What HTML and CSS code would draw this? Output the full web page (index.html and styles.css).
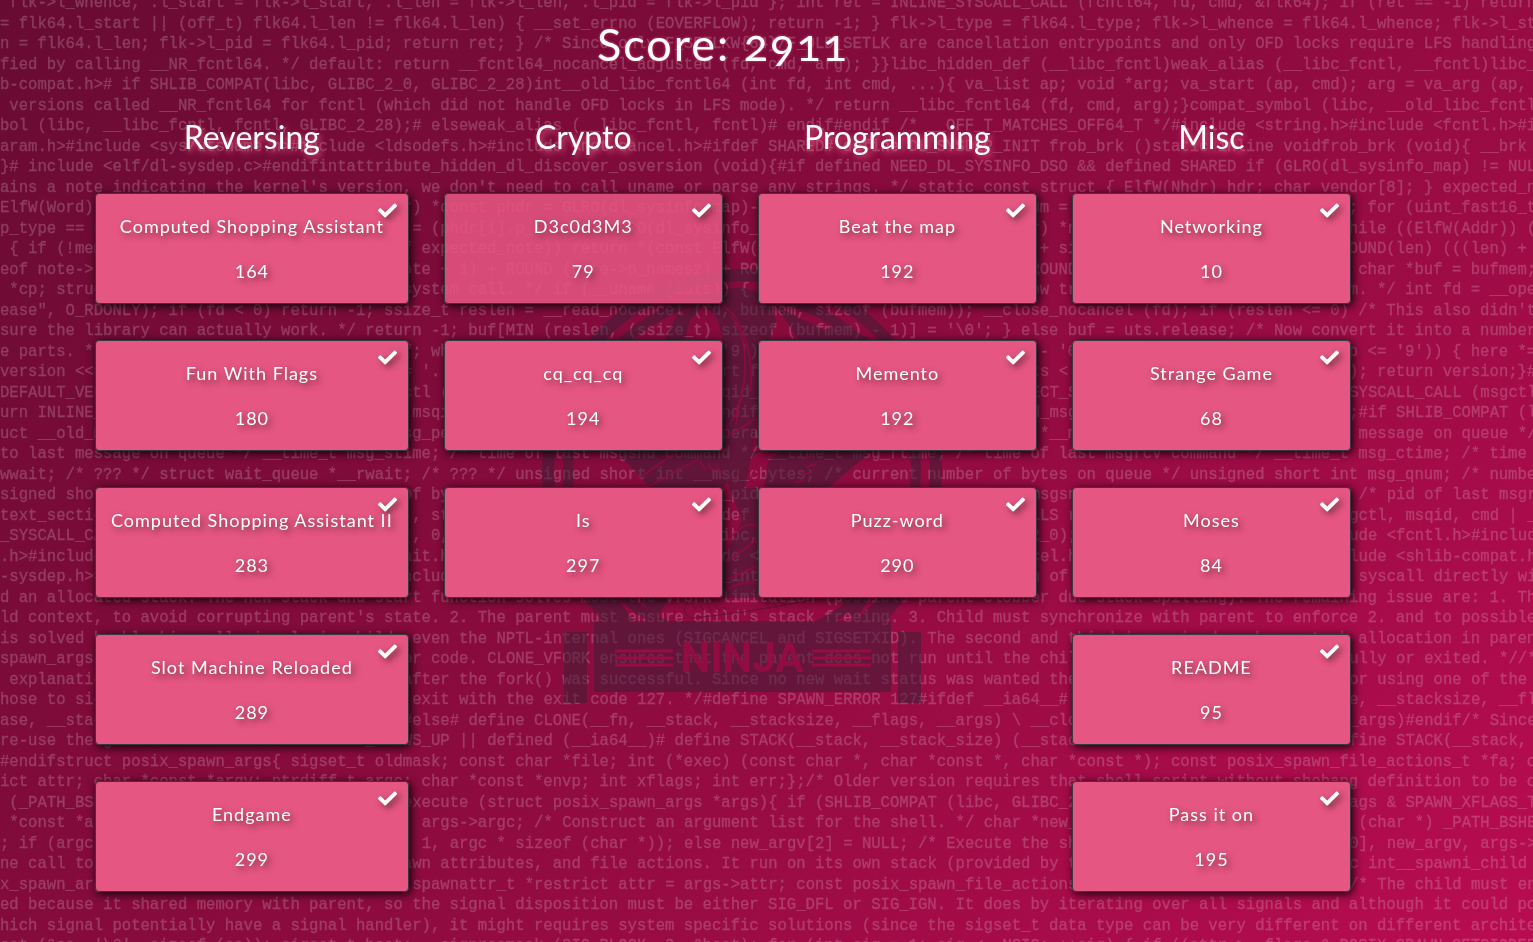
FILE: index.html
```html
<!DOCTYPE html>
<html lang="en">
<head>
<meta charset="utf-8">
<meta name="viewport" content="width=device-width, initial-scale=1">
<title>Challenges</title>
<link rel="stylesheet" href="styles.css">
</head>
<body>
<svg class="backdrop" viewBox="0 0 1533 942" preserveAspectRatio="xMinYMin slice" aria-hidden="true">
  <g transform="scale(.0976)">
    <text class="code" x="0" y="-135">
      <tspan x="0" dy="210"> flk-&gt;l_whence, .l_start = flk-&gt;l_start, .l_len = flk-&gt;l_len, .l_pid = flk-&gt;l_pid }; int ret = INLINE_SYSCALL_CALL (fcntl64, fd, cmd, &amp;flk64); if (ret == -1) return</tspan>
      <tspan x="0" dy="210">= flk64.l_start || (off_t) flk64.l_len != flk64.l_len) { __set_errno (EOVERFLOW); return -1; } flk-&gt;l_type = flk64.l_type; flk-&gt;l_whence = flk64.l_whence; flk-&gt;l_st</tspan>
      <tspan x="0" dy="210">n = flk64.l_len; flk-&gt;l_pid = flk64.l_pid; return ret; } /* Since only F_SETLKW{64}/F_OLD_SETLK are cancellation entrypoints and only OFD locks require LFS handling</tspan>
      <tspan x="0" dy="210">fied by calling __NR_fcntl64. */ default: return __fcntl64_nocancel_adjusted (fd, cmd, arg); }}libc_hidden_def (__libc_fcntl)weak_alias (__libc_fcntl, __fcntl)libc_</tspan>
      <tspan x="0" dy="210">b-compat.h&gt;# if SHLIB_COMPAT(libc, GLIBC_2_0, GLIBC_2_28)int__old_libc_fcntl64 (int fd, int cmd, ...){ va_list ap; void *arg; va_start (ap, cmd); arg = va_arg (ap, </tspan>
      <tspan x="0" dy="210"> versions called __NR_fcntl64 for fcntl (which did not handle OFD locks in LFS mode). */ return __libc_fcntl64 (fd, cmd, arg);}compat_symbol (libc, __old_libc_fcntl</tspan>
      <tspan x="0" dy="210">bol (libc, __libc_fcntl, fcntl, GLIBC_2_28);# elseweak_alias (__libc_fcntl, fcntl)# endif#endif /* __OFF_T_MATCHES_OFF64_T */#include &lt;string.h&gt;#include &lt;fcntl.h&gt;#i</tspan>
      <tspan x="0" dy="210">aram.h&gt;#include &lt;sys/utsname.h&gt;#include &lt;ldsodefs.h&gt;#include &lt;not-cancel.h&gt;#ifdef SHARED# define DL_SYSDEP_INIT frob_brk ()static inline voidfrob_brk (void){ __brk (0</tspan>
      <tspan x="0" dy="210">}# include &lt;elf/dl-sysdep.c&gt;#endifintattribute_hidden_dl_discover_osversion (void){#if defined NEED_DL_SYSINFO_DSO &amp;&amp; defined SHARED if (GLRO(dl_sysinfo_map) != NUL</tspan>
      <tspan x="0" dy="210">ains a note indicating the kernel's version, we don't need to call uname or parse any strings. */ static const struct { ElfW(Nhdr) hdr; char vendor[8]; } expected_n</tspan>
      <tspan x="0" dy="210">ElfW(Word)), 0 }, "Linux" }; const ElfW(Phdr) *const phdr = GLRO(dl_sysinfo_map)-&gt;l_phdr; const ElfW(Word) phnum = GLRO(dl_sysinfo_map)-&gt;l_phnum; for (uint_fast16_t</tspan>
      <tspan x="0" dy="210">p_type == PT_NOTE) { const ElfW(Addr) start = (phdr[i].p_vaddr + GLRO(dl_sysinfo_map)-&gt;l_addr); const ElfW(Nhdr) *note = (const void *) start; while ((ElfW(Addr)) (</tspan>
      <tspan x="0" dy="210"> { if (!memcmp (note, &amp;expected_note, sizeof expected_note)) return *(const ElfW(Word) *) ((const void *) note + sizeof expected_note);#define ROUND(len) (((len) + </tspan>
      <tspan x="0" dy="210">eof note-&gt;n_type) note = ((const void *) (note + 1) + ROUND (note-&gt;n_namesz) + ROUND (note-&gt;n_descsz));#undef ROUND } } }#endif char bufmem[64]; char *buf = bufmem;</tspan>
      <tspan x="0" dy="210"> *cp; struct utsname uts; /* Try the uname system call. */ if (__uname (&amp;uts)) { /* This was not successful. Now try reading the /proc filesystem. */ int fd = __ope</tspan>
      <tspan x="0" dy="210">ease", O_RDONLY); if (fd &lt; 0) return -1; ssize_t reslen = __read_nocancel (fd, bufmem, sizeof (bufmem)); __close_nocancel (fd); if (reslen &lt;= 0) /* This also didn't</tspan>
      <tspan x="0" dy="210">sure the library can actually work. */ return -1; buf[MIN (reslen, (ssize_t) sizeof (bufmem) - 1)] = '\0'; } else buf = uts.release; /* Now convert it into a number</tspan>
      <tspan x="0" dy="210">e parts. */ unsigned int parts = 0; cp = buf; while ((*cp &gt;= '0') &amp;&amp; (*cp &lt;= '9')) { unsigned int here = *cp++ - '0'; while ((*cp &gt;= '0') &amp;&amp; (*cp &lt;= '9')) { here *=</tspan>
      <tspan x="0" dy="210">version &lt;&lt;= 8; version |= here; if (*cp++ != '.'</tspan><tspan x="6144">/* Another part following? */ break; } if (parts &lt; 3) version &lt;&lt;= 8 * (3 - parts); return version;}#</tspan>
      <tspan x="0" dy="210">DEFAULT_VERSION</tspan><tspan x="3840">msgctl (int</tspan><tspan x="7200">msqid_ds</tspan><tspan x="10272">DIRECT_SYSV</tspan><tspan x="13152">INLINE_SYSCALL_CALL (msgctl</tspan>
      <tspan x="0" dy="210">urn INLINE_SYSCALL</tspan><tspan x="4224">msqid</tspan><tspan x="7296">endif</tspan><tspan x="10464">ld_msgctl</tspan><tspan x="13824">;#if SHLIB_COMPAT (l</tspan>
      <tspan x="0" dy="210">uct __old_msqid_ds</tspan><tspan x="4032">msg_perm</tspan><tspan x="7296">operation</tspan><tspan x="10656">*__msg_first</tspan><tspan x="13920">message on queue */</tspan>
      <tspan x="0" dy="210">to last message on queue */ __time_t msg_stime; /* time of last msgsnd command */ __time_t msg_rtime; /* time of last msgrcv command */ __time_t msg_ctime; /* time </tspan>
      <tspan x="0" dy="210">wwait; /* ??? */ struct wait_queue *__rwait; /* ??? */ unsigned short int __msg_cbytes; /* current number of bytes on queue */ unsigned short int msg_qnum; /* numbe</tspan>
      <tspan x="0" dy="210">signed short int</tspan><tspan x="4128">of bytes</tspan><tspan x="7296">__pid_t</tspan><tspan x="10560">msgsnd */</tspan><tspan x="13920">/* pid of last msgr</tspan>
      <tspan x="0" dy="210">text_section</tspan><tspan x="4224">, struct</tspan><tspan x="7200">ifdef </tspan><tspan x="10368">CALLS return</tspan><tspan x="13632">msgctl, msqid, cmd | _</tspan>
      <tspan x="0" dy="210">_SYSCALL_CALL</tspan><tspan x="4224">, 0, </tspan><tspan x="7296">libc, </tspan><tspan x="9984">GLIBC_2_0);</tspan><tspan x="13344">#include &lt;fcntl.h&gt;#includ</tspan>
      <tspan x="0" dy="210">.h&gt;#include</tspan><tspan x="4032">wait.h&gt;</tspan><tspan x="6816">#include &lt;</tspan><tspan x="10272">cancel.h&gt;</tspan><tspan x="13440">#include &lt;shlib-compat.h</tspan>
      <tspan x="0" dy="210">-sysdep.h&gt;#include</tspan><tspan x="3936">#include</tspan><tspan x="7392">_internal</tspan><tspan x="10464">on of</tspan><tspan x="13920">syscall directly wi</tspan>
      <tspan x="0" dy="210">d an allocated stack. The new stack and start function solves most the vfork limitation (possible parent clobber due stack spilling). The remaining issue are: 1. Th</tspan>
      <tspan x="0" dy="210">ld context, to avoid corrupting parent's state. 2. The parent must ensure child's stack freeing. 3. Child must synchronize with parent to enforce 2. and to possible</tspan>
      <tspan x="0" dy="210">is solved by blocking all signals in child, even the NPTL-internal ones (SIGCANCEL and SIGSETXID). The second and third issue is done by a stack allocation in paren</tspan>
      <tspan x="0" dy="210">spawn_args</tspan><tspan x="4128">or code. CLONE_VFORK ensures that the parent does not run until the child</tspan><tspan x="13056">successfully or exited. *//*</tspan>
      <tspan x="0" dy="210"> explanation</tspan><tspan x="4128">after the fork() was successful. Since no new wait status was wanted the</tspan><tspan x="13824">or using one of the </tspan>
      <tspan x="0" dy="210">hose to signal</tspan><tspan x="4224">exit with the exit code 127. */#define SPAWN_ERROR 127#ifdef __ia64__# </tspan><tspan x="13824">e, __stacksize, __fl</tspan>
      <tspan x="0" dy="210">ase, __stack</tspan><tspan x="4128">#else# define CLONE(__fn, __stack, __stacksize, __flags, __args) \ __clone</tspan><tspan x="13824">_args)#endif/* Since</tspan>
      <tspan x="0" dy="210">re-use the generic</tspan><tspan x="3744">_GROWS_UP || defined (__ia64__)# define STACK(__stack, __stack_size) (__stack</tspan><tspan x="13632">define STACK(__stack, </tspan>
      <tspan x="0" dy="210">#endifstruct posix_spawn_args{ sigset_t oldmask; const char *file; int (*exec) (const char *, char *const *, char *const *); const posix_spawn_file_actions_t *fa; c</tspan>
      <tspan x="0" dy="210">ict attr; char *const *argv; ptrdiff_t argc; char *const *envp; int xflags; int err;};/* Older version requires that shell script without shebang definition to be c</tspan>
      <tspan x="0" dy="210"> (_PATH_BSHELL</tspan><tspan x="4128">execute (struct posix_spawn_args *args){ if (SHLIB_COMPAT (libc, GLIBC_2_15)</tspan><tspan x="13536">xflags &amp; SPAWN_XFLAGS_T</tspan>
      <tspan x="0" dy="210"> *const *argv</tspan><tspan x="4320">args-&gt;argc; /* Construct an argument list for the shell. */ char *new_argv</tspan><tspan x="13920">(char *) _PATH_BSHE</tspan>
      <tspan x="0" dy="210">; if (argc</tspan><tspan x="4320">1, argc * sizeof (char *)); else new_argv[2] = NULL; /* Execute the shell</tspan><tspan x="13824">0], new_argv, args-&gt;</tspan>
      <tspan x="0" dy="210">ne call to</tspan><tspan x="3936">spawn attributes, and file actions. It run on its own stack (provided by the</tspan><tspan x="13344">static int__spawni_child </tspan>
      <tspan x="0" dy="210">x_spawn_args</tspan><tspan x="4224">spawnattr_t *restrict attr = args-&gt;attr; const posix_spawn_file_actions</tspan><tspan x="13824">/* The child must en</tspan>
      <tspan x="0" dy="210">ed because it shared memory with parent, so the signal disposition must be either SIG_DFL or SIG_IGN. It does by iterating over all signals and although it could po</tspan>
      <tspan x="0" dy="210">hich signal potentially have a signal handler), it might requires system specific solutions (since the sigset_t data type can be very different on different archite</tspan>
      <tspan x="0" dy="210">set (&amp;sa, '\0', sizeof (sa)); sigset_t hset; __sigprocmask (SIG_BLOCK, 0, &amp;hset); for (int sig = 1; sig &lt; _NSIG; ++sig) { if ((attr-&gt;__flags &amp; POSIX_SPAWN_SETSIGDEF</tspan>
    </text>
  </g>

  <!-- ninja emblem -->
  <g class="emblem">
    <circle class="ring" cx="742" cy="469" r="194" stroke-width="12"/>
    <circle class="ring" cx="742" cy="469" r="174" stroke-width="10"/>
    <path d="M700 300Q722 286 745 288L772 306L776 322L768 341L760 400L752 452L745 488H757V598H723V560L742 520L723 470V341L718 320Z"/>
    <path d="M664 341L676 316L706 302L690 320L684 341ZM776 306L824 330L832 326L870 338L868 341H800Z"/>
    <path d="M615 451H760L745 462L722 488H650L638 474ZM780 451H872L828 488H764L768 462Z"/>
    <path d="M583 598H597L616 622H603ZM601 598H617L634 622H622ZM640 598H668L656 622ZM842 598H870L854 622ZM885 598H905L886 622H873Z"/>
    <path d="M594 621H891V692H594ZM564 632H587V703H564ZM898 632H921V703H898Z"/>
  </g>
  <g class="etching">
    <path d="M722 304Q748 330 745 372T724 430M732 312Q756 350 750 392M728 436L757 418M740 400L736 424M626 488L676 452M646 488L700 458M700 461l5 8M708 463l5 8M716 465l5 8M748 488Q752 466 770 456M812 456l-10 4M816 464l-10 3M812 472l-10 3M804 480l-10 3M728 540Q746 520 757 526M726 562L757 540M726 580L757 566M724 592Q744 578 757 584"/>
    <path class="fine" d="M700 301L728 324M712 296L738 322M736 470l6 10M742 462l8 12M688 601Q680 612 690 618Q740 614 812 600M692 604l4 6M700 605l4 6M708 606l4 6M716 606l4 6M724 607l4 6M766 603l4 6M774 603l4 6M782 602l4 6"/>
  </g>
  <path class="stripes" d="M615 651H673M615 658H673M615 665H673M812 651H871M812 658H871M812 665H871"/>
  <text class="emblem-name" x="742" y="672">NINJA</text>
</svg>

<svg class="sprite" aria-hidden="true">
  <symbol id="check" viewBox="0 0 512 512">
    <path d="M173.898 439.404l-166.4-166.4c-9.997-9.997-9.997-26.206 0-36.204l36.203-36.204c9.997-9.998 26.207-9.998 36.204 0L192 312.69 432.095 72.596c9.997-9.997 26.207-9.997 36.204 0l36.203 36.204c9.997 9.997 9.997 26.206 0 36.204l-294.4 294.401c-9.998 9.997-26.207 9.997-36.204-.001z"/>
  </symbol>
</svg>

<main class="page">
  <h1 class="score">Score: 2911</h1>
  <div class="board">
    <section class="category">
      <h2 class="category-name">Reversing</h2>
      <button class="card" type="button"><svg class="check"><use href="#check"/></svg><span>Computed Shopping Assistant</span><span>164</span></button>
      <button class="card" type="button"><svg class="check"><use href="#check"/></svg><span>Fun With Flags</span><span>180</span></button>
      <button class="card" type="button"><svg class="check"><use href="#check"/></svg><span>Computed Shopping Assistant II</span><span>283</span></button>
      <button class="card" type="button"><svg class="check"><use href="#check"/></svg><span>Slot Machine Reloaded</span><span>289</span></button>
      <button class="card" type="button"><svg class="check"><use href="#check"/></svg><span>Endgame</span><span>299</span></button>
    </section>
    <section class="category">
      <h2 class="category-name">Crypto</h2>
      <button class="card card-active" type="button"><svg class="check"><use href="#check"/></svg><span>D3c0d3M3</span><span>79</span></button>
      <button class="card" type="button"><svg class="check"><use href="#check"/></svg><span>cq_cq_cq</span><span>194</span></button>
      <button class="card" type="button"><svg class="check"><use href="#check"/></svg><span>Is</span><span>297</span></button>
    </section>
    <section class="category">
      <h2 class="category-name">Programming</h2>
      <button class="card" type="button"><svg class="check"><use href="#check"/></svg><span>Beat the map</span><span>192</span></button>
      <button class="card" type="button"><svg class="check"><use href="#check"/></svg><span>Memento</span><span>192</span></button>
      <button class="card" type="button"><svg class="check"><use href="#check"/></svg><span>Puzz-word</span><span>290</span></button>
    </section>
    <section class="category">
      <h2 class="category-name">Misc</h2>
      <button class="card" type="button"><svg class="check"><use href="#check"/></svg><span>Networking</span><span>10</span></button>
      <button class="card" type="button"><svg class="check"><use href="#check"/></svg><span>Strange Game</span><span>68</span></button>
      <button class="card" type="button"><svg class="check"><use href="#check"/></svg><span>Moses</span><span>84</span></button>
      <button class="card" type="button"><svg class="check"><use href="#check"/></svg><span>README</span><span>95</span></button>
      <button class="card" type="button"><svg class="check"><use href="#check"/></svg><span>Pass it on</span><span>195</span></button>
    </section>
  </div>
</main>
</body>
</html>
```
FILE: styles.css
```css
* {
  box-sizing: border-box;
}

body {
  margin: 0;
  min-height: 100vh;
  background: linear-gradient(135deg, #680b32 0%, #8c0b3e 50%, #b90c51 100%) fixed;
  color: #fff;
  font-family: Lato, "Liberation Sans", sans-serif;
}

.backdrop {
  position: fixed;
  inset: 0;
  z-index: -1;
  width: 100%;
  height: 100%;
}

.sprite {
  display: none;
}

.code {
  font-family: "Liberation Mono", monospace;
  font-size: 160px;
  white-space: pre;
  fill: #e1bed2;
  stroke: #e1bed2;
  stroke-width: 3px;
  opacity: 0.27;
}

.emblem {
  fill: #3b2036;
  opacity: 0.52;
}

.ring {
  fill: none;
  stroke: #3b2036;
}

.etching {
  fill: none;
  stroke: #8f0b40;
  stroke-width: 2px;
  opacity: 0.8;
}

.fine {
  stroke: #5c1233;
  stroke-width: 1px;
}

.stripes {
  stroke: #970c43;
  stroke-width: 3px;
}

.emblem-name {
  fill: #970c43;
  font-family: Roboto, sans-serif;
  font-size: 42px;
  font-weight: 700;
  text-anchor: middle;
  opacity: 0.85;
}

.page {
  padding: 16px 182px 48px 95px;
}

.score {
  margin: 0;
  font-size: 45px;
  font-weight: 400;
  font-variant-numeric: oldstyle-nums;
  line-height: 56px;
  letter-spacing: 2px;
  text-align: center;
  text-shadow: 0 0 3px rgba(229, 86, 130, 0.8);
}

.board {
  display: grid;
  grid-template-columns: repeat(4, minmax(auto, 1fr));
  gap: 35px;
  align-items: start;
  margin-top: 45px;
}

.category {
  display: flex;
  flex-direction: column;
  gap: 36px;
}

.category-name {
  margin: 0;
  font-size: 32px;
  font-weight: 400;
  line-height: 40px;
  text-align: center;
  text-shadow: 2px 3px 6px #e55682;
}

.card {
  position: relative;
  display: flex;
  flex-direction: column;
  align-items: center;
  gap: 18px;
  padding: 19px 15px 18px;
  border: 1px solid #343a40;
  border-radius: 4px;
  background: #e55682;
  box-shadow: 2px 2px 10px rgba(0, 0, 0, 0.9);
  color: #fff;
  font: inherit;
  font-size: 18px;
  line-height: 27px;
  letter-spacing: 1px;
  text-align: center;
  text-shadow: 3px 3px 6px rgba(0, 0, 0, 0.5);
  white-space: nowrap;
}

.card-active {
  background: rgba(229, 86, 130, 0.86);
}

.check {
  position: absolute;
  top: 7px;
  right: 11px;
  width: 19px;
  height: 19px;
  fill: #fff;
  filter: drop-shadow(3px 3px 3px rgba(0, 0, 0, 0.5));
}
```
